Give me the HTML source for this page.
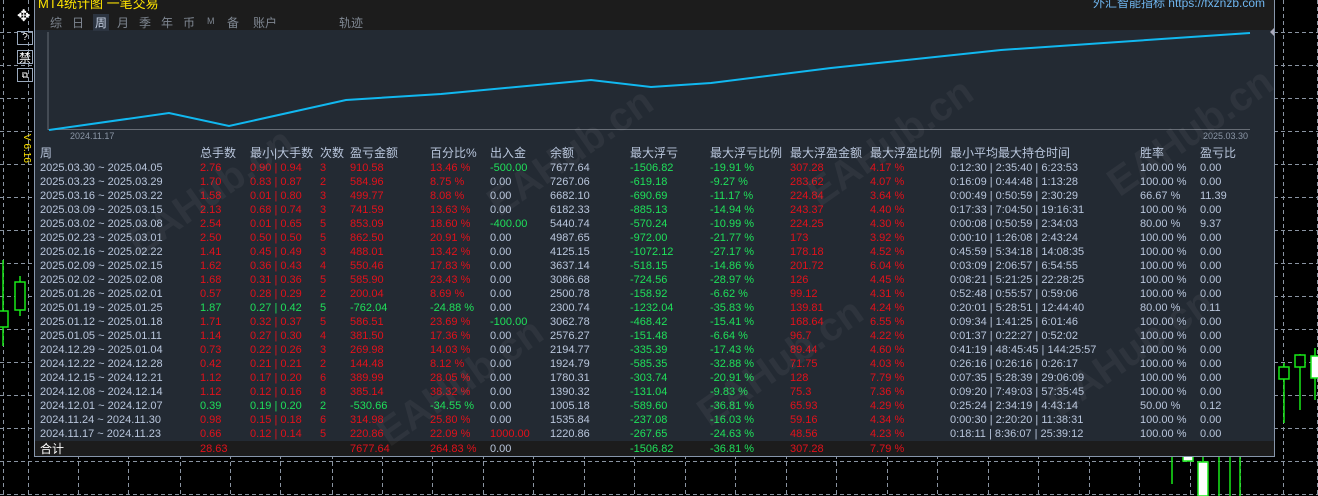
<!DOCTYPE html>
<html><head><meta charset="utf-8"><style>
*{margin:0;padding:0;box-sizing:border-box}
body{width:1318px;height:496px;background:#000;position:relative;overflow:hidden;font-family:"Liberation Sans","Noto Sans CJK SC",sans-serif;font-size:11px;color:#b9c6dc}
.p{position:absolute;left:34px;top:0;width:1241px;height:457px;background:#232a33;border:1px solid #8796ab;border-top:none}
.hd{position:absolute;left:0;top:0;width:100%;height:30px;background:#1c1c1c}
.r{position:absolute;left:0;height:14px;line-height:14px;white-space:nowrap;width:100%}
.r span{position:absolute}
.a{left:5px}.b{left:165px}.c{left:215px}.d{left:285px}.e{left:315px}.f{left:395px}.g{left:455px}.h{left:515px}.i{left:595px}.j{left:675px}.k{left:755px}.l{left:835px}.m{left:915px}.n{left:1105px}.o{left:1165px}
.R{color:#e2111b}.G{color:#1fe05a}
.hr{font-size:12px;color:#b9c6dc}
.tb span{position:absolute;white-space:nowrap}
.wm{position:absolute;color:rgba(255,255,255,0.05);font-size:40px;font-weight:bold;transform:rotate(-35deg);white-space:nowrap}
</style></head><body>
<svg width="1318" height="496" style="position:absolute;left:0;top:0">
<g stroke="#8a94a2" stroke-dasharray="4,3" stroke-width="1">
<line x1="0" y1="32.5" x2="1318" y2="32.5"/><line x1="0" y1="65.5" x2="1318" y2="65.5"/><line x1="0" y1="98.5" x2="1318" y2="98.5"/><line x1="0" y1="131.5" x2="1318" y2="131.5"/><line x1="0" y1="164.5" x2="1318" y2="164.5"/><line x1="0" y1="197.5" x2="1318" y2="197.5"/><line x1="0" y1="230.5" x2="1318" y2="230.5"/><line x1="0" y1="263.5" x2="1318" y2="263.5"/><line x1="0" y1="296.5" x2="1318" y2="296.5"/><line x1="0" y1="329.5" x2="1318" y2="329.5"/><line x1="0" y1="362.5" x2="1318" y2="362.5"/><line x1="0" y1="395.5" x2="1318" y2="395.5"/><line x1="0" y1="428.5" x2="1318" y2="428.5"/><line x1="0" y1="461.5" x2="1318" y2="461.5"/><line x1="0" y1="494.5" x2="1318" y2="494.5"/>
<line x1="3.5" y1="0" x2="3.5" y2="496"/><line x1="28.5" y1="0" x2="28.5" y2="496"/><line x1="78.5" y1="0" x2="78.5" y2="496"/><line x1="128.5" y1="0" x2="128.5" y2="496"/><line x1="180.5" y1="0" x2="180.5" y2="496"/><line x1="230.5" y1="0" x2="230.5" y2="496"/><line x1="280.5" y1="0" x2="280.5" y2="496"/><line x1="332.5" y1="0" x2="332.5" y2="496"/><line x1="382.5" y1="0" x2="382.5" y2="496"/><line x1="432.5" y1="0" x2="432.5" y2="496"/><line x1="483.5" y1="0" x2="483.5" y2="496"/><line x1="533.5" y1="0" x2="533.5" y2="496"/><line x1="584.5" y1="0" x2="584.5" y2="496"/><line x1="634.5" y1="0" x2="634.5" y2="496"/><line x1="685.5" y1="0" x2="685.5" y2="496"/><line x1="735.5" y1="0" x2="735.5" y2="496"/><line x1="786.5" y1="0" x2="786.5" y2="496"/><line x1="836.5" y1="0" x2="836.5" y2="496"/><line x1="887.5" y1="0" x2="887.5" y2="496"/><line x1="937.5" y1="0" x2="937.5" y2="496"/><line x1="988.5" y1="0" x2="988.5" y2="496"/><line x1="1038.5" y1="0" x2="1038.5" y2="496"/><line x1="1089.5" y1="0" x2="1089.5" y2="496"/><line x1="1139.5" y1="0" x2="1139.5" y2="496"/><line x1="1190.5" y1="0" x2="1190.5" y2="496"/><line x1="1240.5" y1="0" x2="1240.5" y2="496"/><line x1="1283.5" y1="0" x2="1283.5" y2="496"/><line x1="1317.5" y1="0" x2="1317.5" y2="496"/>
</g>
<g stroke="#18e818" stroke-width="1.5" fill="#000">
<line x1="3" y1="260" x2="3" y2="346"/><rect x="-2" y="311" width="10" height="16"/>
<line x1="20" y1="276" x2="20" y2="316"/><rect x="15" y="282" width="10" height="28"/>
<line x1="1284" y1="363" x2="1284" y2="423"/><rect x="1279" y="367" width="10" height="12"/>
<line x1="1300" y1="354" x2="1300" y2="410"/><rect x="1295" y="355" width="10" height="12"/>
<line x1="1315" y1="348" x2="1315" y2="400"/><rect x="1311" y="356" width="10" height="22" fill="#fff"/>
<line x1="1172" y1="457" x2="1172" y2="484"/><rect x="1183" y="455" width="10" height="6" fill="#fff"/>
<line x1="1203" y1="456" x2="1203" y2="496"/><rect x="1198" y="462" width="10" height="34" fill="#fff"/>
<line x1="1219" y1="457" x2="1219" y2="496"/><line x1="1230" y1="457" x2="1230" y2="496"/><line x1="1240" y1="457" x2="1240" y2="496"/>
</g>
</svg>
<div style="position:absolute;left:17px;top:9px;color:#fff;font-size:16px;line-height:16px">✥</div>
<div style="position:absolute;left:17px;top:31px;width:16px;height:14px;border:1px solid #9aa9bd;color:#fff;font-size:10px;text-align:center;line-height:12px">?</div>
<div style="position:absolute;left:17px;top:50px;width:16px;height:14px;color:#fff;font-size:12px;line-height:14px;text-align:center;border:1px solid #9aa9bd">禁</div>
<div style="position:absolute;left:17px;top:68px;width:16px;height:14px;border:1px solid #9aa9bd;color:#fff;font-size:9px;text-align:center;line-height:12px">⧉</div>
<div style="position:absolute;left:21px;top:134px;color:#ffe400;font-size:10px;writing-mode:vertical-rl;line-height:10px">V 6.16</div>
<div class="p">
<div class="hd">
<div style="position:absolute;left:3px;top:-7px;color:#ffe400;font-size:13px;white-space:nowrap">MT4统计图 一笔交易</div>
<div class="tb" style="position:absolute;left:15px;top:14px;font-size:12px;color:#7f8792">
<span style="left:0">综</span><span style="left:22px">日</span><span style="left:43px;background:#2c3440;color:#c9d4e6;padding:0 2px">周</span><span style="left:67px">月</span><span style="left:89px">季</span><span style="left:111px">年</span><span style="left:133px">币</span><span style="left:157px;font-size:9px;top:2px">M</span><span style="left:177px">备</span><span style="left:203px">账户</span><span style="left:289px">轨迹</span></div>
<div style="position:absolute;right:9px;top:-6px;color:#6fb6f0;font-size:12px;white-space:nowrap">外汇智能指标 https://fxznzb.com</div>
</div>
<svg width="1241" height="120" style="position:absolute;left:0;top:30px">
<line x1="13" y1="2" x2="13" y2="100" stroke="#666c75"/>
<line x1="13" y1="99.5" x2="1215" y2="99.5" stroke="#666c75"/>
<polyline fill="none" stroke="#11b8f0" stroke-width="2" points="14,100 134,83 194,96 311,70 406,64 556,50 616,57 676,53 796,38 966,20 1215,3"/>
<text x="35" y="109" fill="#8b96a6" font-size="9" font-family="Liberation Sans">2024.11.17</text>
<text x="1168" y="109" fill="#8b96a6" font-size="9" font-family="Liberation Sans">2025.03.30</text>
</svg>
<div style="position:absolute;right:0;top:28px;width:0;height:0;border-top:4px solid transparent;border-bottom:4px solid transparent;border-right:4px solid #aab"></div>
<div class="r hr" style="top:146px"><span class="a">周</span><span class="b">总手数</span><span class="c">最小|大手数</span><span class="d">次数</span><span class="e">盈亏金额</span><span class="f">百分比%</span><span class="g">出入金</span><span class="h">余额</span><span class="i">最大浮亏</span><span class="j">最大浮亏比例</span><span class="k">最大浮盈金额</span><span class="l">最大浮盈比例</span><span class="m">最小平均最大持仓时间</span><span class="n">胜率</span><span class="o">盈亏比</span></div>
<div class="r" style="top:161px"><span class="a">2025.03.30 ~ 2025.04.05</span><span class="b R">2.76</span><span class="c R">0.90 | 0.94</span><span class="d R">3</span><span class="e R">910.58</span><span class="f R">13.46 %</span><span class="g G">-500.00</span><span class="h">7677.64</span><span class="i G">-1506.82</span><span class="j G">-19.91 %</span><span class="k R">307.28</span><span class="l R">4.17 %</span><span class="m">0:12:30 | 2:35:40 | 6:23:53</span><span class="n">100.00 %</span><span class="o">0.00</span></div>
<div class="r" style="top:175px"><span class="a">2025.03.23 ~ 2025.03.29</span><span class="b R">1.70</span><span class="c R">0.83 | 0.87</span><span class="d R">2</span><span class="e R">584.96</span><span class="f R">8.75 %</span><span class="g">0.00</span><span class="h">7267.06</span><span class="i G">-619.18</span><span class="j G">-9.27 %</span><span class="k R">283.62</span><span class="l R">4.07 %</span><span class="m">0:16:09 | 0:44:48 | 1:13:28</span><span class="n">100.00 %</span><span class="o">0.00</span></div>
<div class="r" style="top:189px"><span class="a">2025.03.16 ~ 2025.03.22</span><span class="b R">1.58</span><span class="c R">0.01 | 0.80</span><span class="d R">3</span><span class="e R">499.77</span><span class="f R">8.08 %</span><span class="g">0.00</span><span class="h">6682.10</span><span class="i G">-690.69</span><span class="j G">-11.17 %</span><span class="k R">224.84</span><span class="l R">3.64 %</span><span class="m">0:00:49 | 0:50:59 | 2:30:29</span><span class="n">66.67 %</span><span class="o">11.39</span></div>
<div class="r" style="top:203px"><span class="a">2025.03.09 ~ 2025.03.15</span><span class="b R">2.13</span><span class="c R">0.68 | 0.74</span><span class="d R">3</span><span class="e R">741.59</span><span class="f R">13.63 %</span><span class="g">0.00</span><span class="h">6182.33</span><span class="i G">-885.13</span><span class="j G">-14.94 %</span><span class="k R">243.37</span><span class="l R">4.40 %</span><span class="m">0:17:33 | 7:04:50 | 19:16:31</span><span class="n">100.00 %</span><span class="o">0.00</span></div>
<div class="r" style="top:217px"><span class="a">2025.03.02 ~ 2025.03.08</span><span class="b R">2.54</span><span class="c R">0.01 | 0.65</span><span class="d R">5</span><span class="e R">853.09</span><span class="f R">18.60 %</span><span class="g G">-400.00</span><span class="h">5440.74</span><span class="i G">-570.24</span><span class="j G">-10.99 %</span><span class="k R">224.25</span><span class="l R">4.30 %</span><span class="m">0:00:08 | 0:50:59 | 2:34:03</span><span class="n">80.00 %</span><span class="o">9.37</span></div>
<div class="r" style="top:231px"><span class="a">2025.02.23 ~ 2025.03.01</span><span class="b R">2.50</span><span class="c R">0.50 | 0.50</span><span class="d R">5</span><span class="e R">862.50</span><span class="f R">20.91 %</span><span class="g">0.00</span><span class="h">4987.65</span><span class="i G">-972.00</span><span class="j G">-21.77 %</span><span class="k R">173</span><span class="l R">3.92 %</span><span class="m">0:00:10 | 1:26:08 | 2:43:24</span><span class="n">100.00 %</span><span class="o">0.00</span></div>
<div class="r" style="top:245px"><span class="a">2025.02.16 ~ 2025.02.22</span><span class="b R">1.41</span><span class="c R">0.45 | 0.49</span><span class="d R">3</span><span class="e R">488.01</span><span class="f R">13.42 %</span><span class="g">0.00</span><span class="h">4125.15</span><span class="i G">-1072.12</span><span class="j G">-27.17 %</span><span class="k R">178.18</span><span class="l R">4.52 %</span><span class="m">0:45:59 | 5:34:18 | 14:08:35</span><span class="n">100.00 %</span><span class="o">0.00</span></div>
<div class="r" style="top:259px"><span class="a">2025.02.09 ~ 2025.02.15</span><span class="b R">1.62</span><span class="c R">0.36 | 0.43</span><span class="d R">4</span><span class="e R">550.46</span><span class="f R">17.83 %</span><span class="g">0.00</span><span class="h">3637.14</span><span class="i G">-518.15</span><span class="j G">-14.86 %</span><span class="k R">201.72</span><span class="l R">6.04 %</span><span class="m">0:03:09 | 2:06:57 | 6:54:55</span><span class="n">100.00 %</span><span class="o">0.00</span></div>
<div class="r" style="top:273px"><span class="a">2025.02.02 ~ 2025.02.08</span><span class="b R">1.68</span><span class="c R">0.31 | 0.36</span><span class="d R">5</span><span class="e R">585.90</span><span class="f R">23.43 %</span><span class="g">0.00</span><span class="h">3086.68</span><span class="i G">-724.56</span><span class="j G">-28.97 %</span><span class="k R">126</span><span class="l R">4.45 %</span><span class="m">0:08:21 | 5:21:25 | 22:28:25</span><span class="n">100.00 %</span><span class="o">0.00</span></div>
<div class="r" style="top:287px"><span class="a">2025.01.26 ~ 2025.02.01</span><span class="b R">0.57</span><span class="c R">0.28 | 0.29</span><span class="d R">2</span><span class="e R">200.04</span><span class="f R">8.69 %</span><span class="g">0.00</span><span class="h">2500.78</span><span class="i G">-158.92</span><span class="j G">-6.62 %</span><span class="k R">99.12</span><span class="l R">4.31 %</span><span class="m">0:52:48 | 0:55:57 | 0:59:06</span><span class="n">100.00 %</span><span class="o">0.00</span></div>
<div class="r" style="top:301px"><span class="a">2025.01.19 ~ 2025.01.25</span><span class="b G">1.87</span><span class="c G">0.27 | 0.42</span><span class="d G">5</span><span class="e G">-762.04</span><span class="f G">-24.88 %</span><span class="g">0.00</span><span class="h">2300.74</span><span class="i G">-1232.04</span><span class="j G">-35.83 %</span><span class="k R">139.81</span><span class="l R">4.24 %</span><span class="m">0:20:01 | 5:28:51 | 12:44:40</span><span class="n">80.00 %</span><span class="o">0.11</span></div>
<div class="r" style="top:315px"><span class="a">2025.01.12 ~ 2025.01.18</span><span class="b R">1.71</span><span class="c R">0.32 | 0.37</span><span class="d R">5</span><span class="e R">586.51</span><span class="f R">23.69 %</span><span class="g G">-100.00</span><span class="h">3062.78</span><span class="i G">-468.42</span><span class="j G">-15.41 %</span><span class="k R">168.64</span><span class="l R">6.55 %</span><span class="m">0:09:34 | 1:41:25 | 6:01:46</span><span class="n">100.00 %</span><span class="o">0.00</span></div>
<div class="r" style="top:329px"><span class="a">2025.01.05 ~ 2025.01.11</span><span class="b R">1.14</span><span class="c R">0.27 | 0.30</span><span class="d R">4</span><span class="e R">381.50</span><span class="f R">17.36 %</span><span class="g">0.00</span><span class="h">2576.27</span><span class="i G">-151.48</span><span class="j G">-6.64 %</span><span class="k R">96.7</span><span class="l R">4.22 %</span><span class="m">0:01:37 | 0:22:27 | 0:52:02</span><span class="n">100.00 %</span><span class="o">0.00</span></div>
<div class="r" style="top:343px"><span class="a">2024.12.29 ~ 2025.01.04</span><span class="b R">0.73</span><span class="c R">0.22 | 0.26</span><span class="d R">3</span><span class="e R">269.98</span><span class="f R">14.03 %</span><span class="g">0.00</span><span class="h">2194.77</span><span class="i G">-335.39</span><span class="j G">-17.43 %</span><span class="k R">89.44</span><span class="l R">4.60 %</span><span class="m">0:41:19 | 48:45:45 | 144:25:57</span><span class="n">100.00 %</span><span class="o">0.00</span></div>
<div class="r" style="top:357px"><span class="a">2024.12.22 ~ 2024.12.28</span><span class="b R">0.42</span><span class="c R">0.21 | 0.21</span><span class="d R">2</span><span class="e R">144.48</span><span class="f R">8.12 %</span><span class="g">0.00</span><span class="h">1924.79</span><span class="i G">-585.35</span><span class="j G">-32.88 %</span><span class="k R">71.75</span><span class="l R">4.03 %</span><span class="m">0:26:16 | 0:26:16 | 0:26:17</span><span class="n">100.00 %</span><span class="o">0.00</span></div>
<div class="r" style="top:371px"><span class="a">2024.12.15 ~ 2024.12.21</span><span class="b R">1.12</span><span class="c R">0.17 | 0.20</span><span class="d R">6</span><span class="e R">389.99</span><span class="f R">28.05 %</span><span class="g">0.00</span><span class="h">1780.31</span><span class="i G">-303.74</span><span class="j G">-20.91 %</span><span class="k R">128</span><span class="l R">7.79 %</span><span class="m">0:07:35 | 5:28:39 | 29:06:09</span><span class="n">100.00 %</span><span class="o">0.00</span></div>
<div class="r" style="top:385px"><span class="a">2024.12.08 ~ 2024.12.14</span><span class="b R">1.12</span><span class="c R">0.12 | 0.16</span><span class="d R">8</span><span class="e R">385.14</span><span class="f R">38.32 %</span><span class="g">0.00</span><span class="h">1390.32</span><span class="i G">-131.04</span><span class="j G">-9.83 %</span><span class="k R">75.3</span><span class="l R">7.36 %</span><span class="m">0:09:20 | 7:49:03 | 57:35:45</span><span class="n">100.00 %</span><span class="o">0.00</span></div>
<div class="r" style="top:399px"><span class="a">2024.12.01 ~ 2024.12.07</span><span class="b G">0.39</span><span class="c G">0.19 | 0.20</span><span class="d G">2</span><span class="e G">-530.66</span><span class="f G">-34.55 %</span><span class="g">0.00</span><span class="h">1005.18</span><span class="i G">-589.60</span><span class="j G">-36.81 %</span><span class="k R">65.93</span><span class="l R">4.29 %</span><span class="m">0:25:24 | 2:34:19 | 4:43:14</span><span class="n">50.00 %</span><span class="o">0.12</span></div>
<div class="r" style="top:413px"><span class="a">2024.11.24 ~ 2024.11.30</span><span class="b R">0.98</span><span class="c R">0.15 | 0.18</span><span class="d R">6</span><span class="e R">314.98</span><span class="f R">25.80 %</span><span class="g">0.00</span><span class="h">1535.84</span><span class="i G">-237.08</span><span class="j G">-16.03 %</span><span class="k R">59.16</span><span class="l R">4.34 %</span><span class="m">0:00:30 | 2:20:20 | 11:38:31</span><span class="n">100.00 %</span><span class="o">0.00</span></div>
<div class="r" style="top:427px"><span class="a">2024.11.17 ~ 2024.11.23</span><span class="b R">0.66</span><span class="c R">0.12 | 0.14</span><span class="d R">5</span><span class="e R">220.86</span><span class="f R">22.09 %</span><span class="g R">1000.00</span><span class="h">1220.86</span><span class="i G">-267.65</span><span class="j G">-24.63 %</span><span class="k R">48.56</span><span class="l R">4.23 %</span><span class="m">0:18:11 | 8:36:07 | 25:39:12</span><span class="n">100.00 %</span><span class="o">0.00</span></div>
<div style="position:absolute;left:0;top:441px;width:100%;height:15px;background:#1c1c1c"></div>
<div class="r" style="top:442px"><span class="a hr" style="color:#fff">合计</span><span class="b R">28.63</span><span class="e R">7677.64</span><span class="f R">264.83 %</span><span class="g">0.00</span><span class="i G">-1506.82</span><span class="j G">-36.81 %</span><span class="k R">307.28</span><span class="l R">7.79 %</span></div>
<div class="wm" style="left:80px;top:170px">EAHub.cn</div>
<div class="wm" style="left:440px;top:130px">EAHub.cn</div>
<div class="wm" style="left:760px;top:120px">EAHub.cn</div>
<div class="wm" style="left:1060px;top:110px">EAHub.cn</div>
<div class="wm" style="left:330px;top:360px">EAHub.cn</div>
<div class="wm" style="left:650px;top:340px">EAHub.cn</div>
<div class="wm" style="left:1000px;top:330px">EAHub.cn</div>
</div>
</body></html>
